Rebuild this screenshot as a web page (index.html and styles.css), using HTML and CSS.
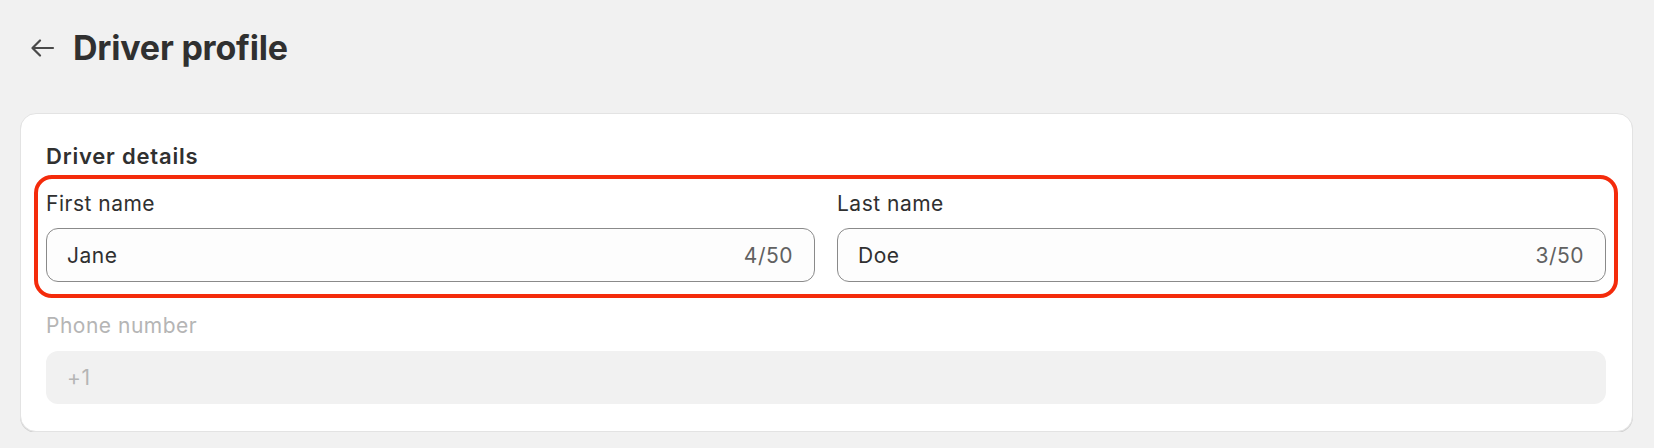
FILE: index.html
```html
<!DOCTYPE html>
<html lang="en">
<head>
<meta charset="utf-8">
<title>Driver profile</title>
<link rel="stylesheet" href="styles.css">
</head>
<body>
<div class="page">
  <header class="header">
    <button class="back" aria-label="Back">
      <svg width="24" height="18" viewBox="0 0 24 18" fill="none" stroke="#4a4a4a" stroke-width="2.2" stroke-linecap="round" stroke-linejoin="round">
        <path d="M22 9H2M9 1.5L1.5 9L9 16.5"/>
      </svg>
    </button>
    <h1 class="title">Driver profile</h1>
  </header>

  <section class="card">
    <h2 class="card-title">Driver details</h2>
    <div class="row highlighted">
      <div class="field">
        <label class="label">First name</label>
        <div class="input">
          <span class="value">Jane</span>
          <span class="counter">4/50</span>
        </div>
      </div>
      <div class="field">
        <label class="label">Last name</label>
        <div class="input">
          <span class="value">Doe</span>
          <span class="counter">3/50</span>
        </div>
      </div>
    </div>
    <div class="field phone">
      <label class="label disabled">Phone number</label>
      <div class="input input-disabled">
        <span class="value">+1</span>
      </div>
    </div>
  </section>
</div>
</body>
</html>
```

FILE: styles.css
```css
* { box-sizing: border-box; }

html, body {
  margin: 0;
  padding: 0;
  background: #f1f1f1;
}

body {
  font-family: Inter, "Noto Sans", sans-serif;
  color: #303030;
}

.page {
  padding: 26px 21px 0 20px;
}

.header {
  display: flex;
  align-items: center;
  height: 44px;
  padding-left: 10px;
  gap: 17px;
}

.back {
  display: flex;
  align-items: center;
  justify-content: center;
  width: 26px;
  height: 26px;
  padding: 0;
  border: 0;
  background: none;
}

.title {
  margin: 0;
  font-size: 34px;
  line-height: 44px;
  font-weight: 700;
  color: #303030;
  letter-spacing: -0.2px;
}

.card {
  margin-top: 43px;
  background: #fff;
  border: 1px solid #e3e3e3;
  border-radius: 16px;
  box-shadow: 0 1px 0 rgba(0, 0, 0, 0.12);
  padding: 28px 26px 27px 25px;
}

.card-title {
  margin: 0;
  font-size: 22px;
  line-height: 28px;
  font-weight: 600;
  letter-spacing: 0.8px;
  color: #303030;
}

.row {
  display: grid;
  grid-template-columns: 1fr 1fr;
  gap: 22px;
  margin-top: 22px;
}

.highlighted {
  position: relative;
}

.highlighted::after {
  content: "";
  position: absolute;
  inset: -17px -12px -16px;
  border: 4px solid #f42b0b;
  border-radius: 18px;
  pointer-events: none;
}

.field {
  display: flex;
  flex-direction: column;
  gap: 12px;
}

.phone {
  margin-top: 32px;
  gap: 13px;
}

.label {
  font-size: 21px;
  line-height: 24px;
  letter-spacing: 0.5px;
  color: #303030;
}

.label.disabled {
  color: #b5b5b5;
}

.input {
  display: flex;
  align-items: center;
  justify-content: space-between;
  height: 54px;
  padding: 0 21px 0 20px;
  border: 1px solid #8a8a8a;
  border-radius: 12px;
  background: #fdfdfd;
  font-size: 21px;
  letter-spacing: 0.5px;
}

.value {
  color: #303030;
}

.counter {
  color: #616161;
}

.input-disabled {
  height: 53px;
  border-color: transparent;
  background: #f1f1f1;
}

.input-disabled .value {
  color: #b5b5b5;
}
```
